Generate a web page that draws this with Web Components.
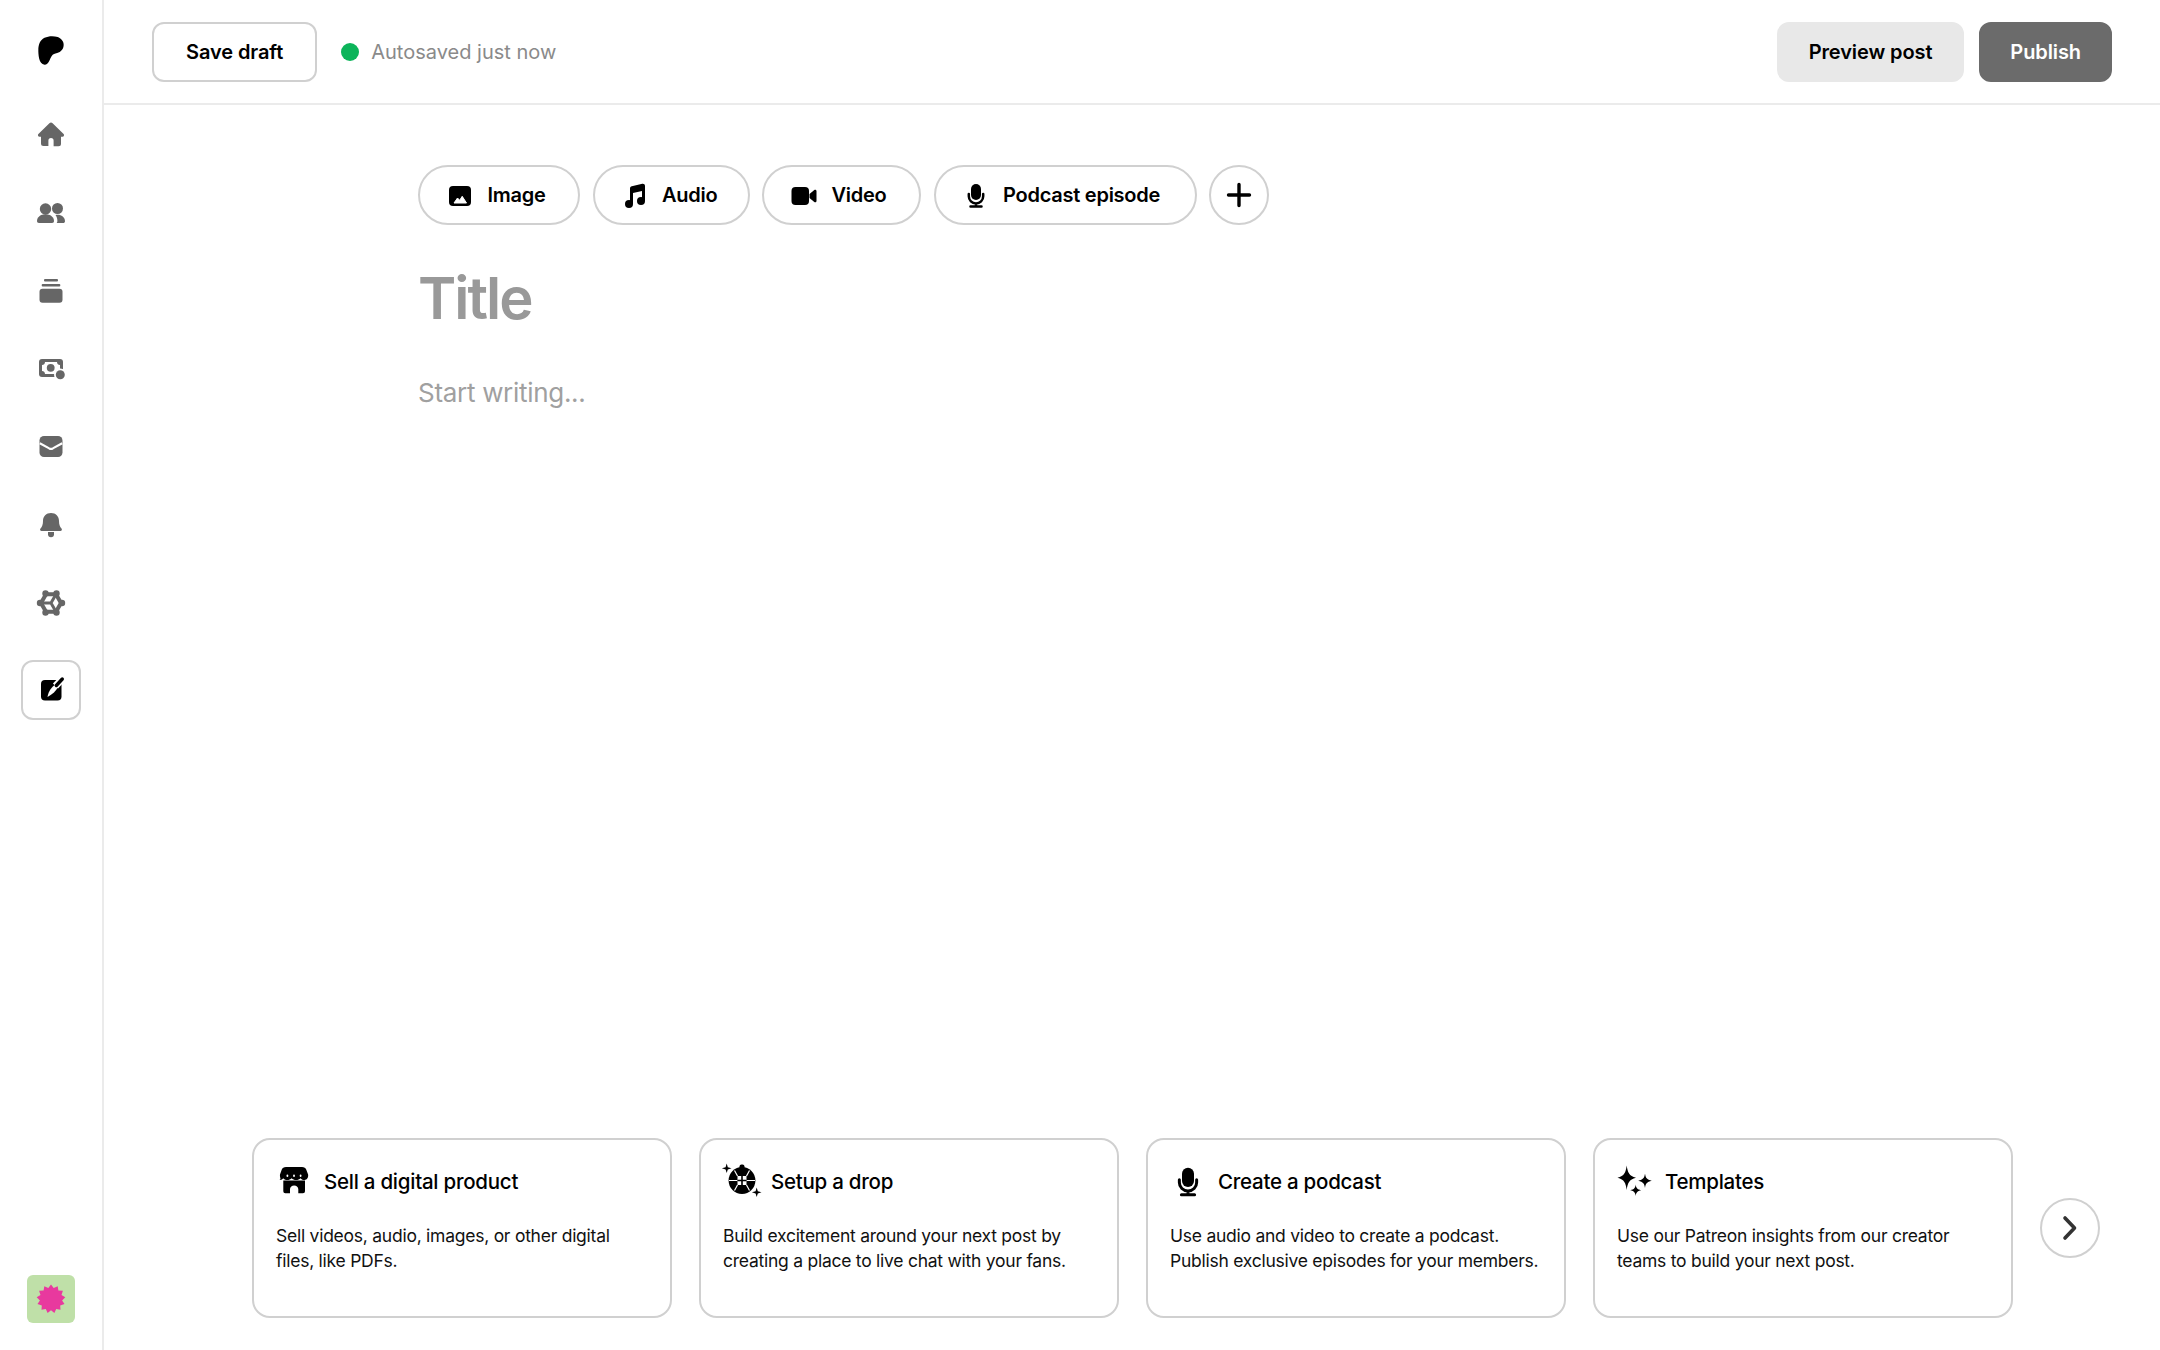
<!DOCTYPE html>
<html lang="en">
<head>
<meta charset="utf-8">
<title>New post</title>
<style>
  html, body { margin: 0; height: 100%; background: #fff; }
  body { font-family: Inter, "Liberation Sans", sans-serif; color: #000; }
</style>
</head>
<body>
<post-app>
  <side-bar slot="side"></side-bar>
  <top-bar slot="top">
    <ui-button slot="left">Save draft</ui-button>
    <save-status slot="left">Autosaved just now</save-status>
    <ui-button slot="right" kind="soft">Preview post</ui-button>
    <ui-button slot="right" kind="dark">Publish</ui-button>
  </top-bar>
  <post-editor slot="main">
    <ui-pill icon="image" width="162">Image</ui-pill>
    <ui-pill icon="music" width="157">Audio</ui-pill>
    <ui-pill icon="video" width="159">Video</ui-pill>
    <ui-pill icon="mic" width="263">Podcast episode</ui-pill>
    <round-button slot="more" icon="plus"></round-button>
  </post-editor>
  <card-row slot="bottom">
    <idea-card icon="store" heading="Sell a digital product">Sell videos, audio, images, or other digital<br>files, like PDFs.</idea-card>
    <idea-card icon="ball" heading="Setup a drop">Build excitement around your next post by<br>creating a place to live chat with your fans.</idea-card>
    <idea-card icon="mic" heading="Create a podcast">Use audio and video to create a podcast.<br>Publish exclusive episodes for your members.</idea-card>
    <idea-card icon="sparkles" heading="Templates">Use our Patreon insights from our creator<br>teams to build your next post.</idea-card>
    <round-button icon="chevron"></round-button>
  </card-row>
</post-app>

<script>
// all icons live here, keyed by name. sizes are set by whoever uses them
const ICONS = {
  logo: '<svg viewBox="0 0 24 24"><path d="M20 7.408c-.003-2.299-1.746-4.183-3.79-4.863-2.54-.844-5.888-.722-8.312.453C4.96 4.421 4.038 7.54 4.004 10.65c-.028 2.557.225 9.291 3.925 9.338 2.75.035 3.159-3.613 4.43-5.364.906-1.246 2.071-1.598 3.506-1.96 2.465-.624 4.14-2.613 4.135-5.256"/></svg>',
  home: '<svg viewBox="0 0 30 30"><path d="M13.4 3.2a2.300 2.300 0 013.200 0l11 10.800c1 1 .3 2.700-1.100 2.700H25v7a2.500 2.500 0 01-2.500 2.500h-4.900v-5.500a2.600 2.600 0 00-5.200 0V26H7.500A2.500 2.500 0 015 23.500v-6.800H3.500c-1.400 0-2.100-1.700-1.100-2.700z"/></svg>',
  people: '<svg viewBox="0 1 30 30"><circle cx="9.500" cy="12" r="5.700"/><path d="M1 24c0-4 3.500-6.800 8.500-6.800S18 20 18 24c0 1-.7 2-2 2H3c-1.300 0-2-1-2-2z"/><circle cx="21.500" cy="11.500" r="5.500"/><path d="M19.500 18c4.500-1.200 9.500 1.500 9.500 6.200 0 1-.7 1.800-2 1.800h-6.300c.5-.6.700-1.200.7-2 0-2.300-.7-4.300-1.900-6z"/></svg>',
  stack: '<svg viewBox="0 0 30 30"><rect x="8" y="3" width="14" height="2.500" rx="1"/><rect x="5.700" y="8" width="18.600" height="2.600" rx="1"/><rect x="3.500" y="12.800" width="23" height="14" rx="3"/></svg>',
  money: '<svg viewBox="0 0 30 30"><rect x="3" y="5" width="24" height="18" rx="3"/><rect x="6" y="8" width="18" height="12" rx="1" fill="#fff"/><path d="M6 8h3c0 2-1.300 3-3 3zM6 20h3c0-2-1.300-3-3-3zM24 8h-3c0 2 1.300 3 3 3z"/><circle cx="14.700" cy="13.800" r="3.900"/><circle cx="24.300" cy="20.700" r="6.300" fill="#fff"/><circle cx="24.300" cy="20.700" r="4.500"/></svg>',
  mail: '<svg viewBox="0 0 30 30"><rect x="3.500" y="4" width="23" height="21" rx="4.500"/><path d="M3.800 11.300l9.400 5.100a4 4 0 003.600 0l9.400-5.100" fill="none" stroke="#fff" stroke-width="2.200"/></svg>',
  bell: '<svg viewBox="0 0 30 30"><path d="M15 3c-4.800 0-8 3.500-8 8 0 3.800-1 6-2.500 7.600-.9 1-.3 2.400 1 2.400h19c1.300 0 1.900-1.400 1-2.400C24 17 23 14.800 23 11c0-4.500-3.200-8-8-8z"/><path d="M12 22h6v2.300a3 3 0 01-6 0z"/></svg>',
  gear: '<svg viewBox="0 0 30 30"><g fill="none" stroke="currentColor"><path d="M25 15l-5 8.660h-10L5 15l5-8.660h10z" stroke-width="4" stroke-linejoin="round"/><path d="M15 15H5M15 15l5-8.660M15 15l5 8.660" stroke-width="3"/></g><circle cx="26" cy="15" r="3.200"/><circle cx="20.500" cy="5.500" r="3.200"/><circle cx="9.500" cy="5.500" r="3.200"/><circle cx="4" cy="15" r="3.200"/><circle cx="9.500" cy="24.500" r="3.200"/><circle cx="20.500" cy="24.500" r="3.200"/></svg>',
  edit: '<svg viewBox="0 0 30 30"><rect x="5" y="5" width="20.500" height="20.500" rx="4"/><path d="M29 1L19.500 11" fill="none" stroke="#fff" stroke-width="7"/><path d="M11.500 22c.8-5.500 4-10 8.500-13l2.600 2.600c-2.600 4.200-6 8-11.100 10.400z" fill="#fff"/><path d="M26.300 4l-6 6.500" fill="none" stroke="currentColor" stroke-width="3.400" stroke-linecap="round"/></svg>',
  image: '<svg viewBox="0 0 30 30"><rect x="4" y="6" width="22" height="20" rx="4"/><path d="M9 23l3.500-5 2.200 2.300 2.500-4 4.300 6.700z" fill="#fff" stroke="#fff" stroke-linejoin="round"/></svg>',
  music: '<svg viewBox="0 0 30 30"><circle cx="9" cy="24" r="4"/><circle cx="21" cy="21" r="4"/><path d="M10 24V8.500c0-1.200.7-2 1.800-2.300l10.500-2.400c1.400-.3 2.700.7 2.700 2.100V21h-3V11l-9 2v11z"/></svg>',
  video: '<svg viewBox="0 0 30 30"><rect x="2.500" y="7" width="17.500" height="18" rx="4"/><path d="M20.500 14l4.800-4c1-.7 2.200 0 2.200 1.100v9.800c0 1.100-1.200 1.800-2.200 1.100l-4.800-4z"/></svg>',
  mic: '<svg viewBox="0 0 30 30"><rect x="10" y="4" width="10" height="16" rx="5"/><path d="M7.800 14v2.200a7.200 7.200 0 0014.400 0V14M15 23.500V26M9.500 26.500h11" fill="none" stroke="currentColor" stroke-width="2.500" stroke-linecap="round"/></svg>',
  plus: '<svg viewBox="0 0 30 30"><path d="M15 4.500v21M4.500 15h21" fill="none" stroke="currentColor" stroke-width="3.400" stroke-linecap="round"/></svg>',
  chevron: '<svg viewBox="0 0 30 30"><path d="M10 5l9.500 10L10 25" fill="none" stroke="#333" stroke-width="3.600" stroke-linecap="round" stroke-linejoin="round"/></svg>',
  store: '<svg viewBox="0 0 36 36"><path d="M10 4h16c2.200 0 3.600.9 4.300 2.700l1.800 4.800c.5 2.900-1.100 5.300-3.500 5.500-1.800.2-3.200-.6-4-1.800-1.100 1.200-2.700 1.800-4.500 1.800s-3.400-.6-4.500-1.800c-1.100 1.200-2.600 1.800-4.400 1.800s-3.200-.6-4-1.800c-.8 1.200-2.200 2-4 1.800C5.800 16.800 3.500 14.400 4 11.500l1.700-4.800C6.400 4.900 7.800 4 10 4z"/><path d="M7.300 17.500h21.700v10.800a2 2 0 01-2 2h-4.700V26a4.200 4.200 0 00-8.300 0v4.300H9.300a2 2 0 01-2-2z"/><g fill="#fff"><rect x="10.500" y="11.500" width="1.800" height="2.500" rx=".9"/><rect x="17.100" y="11.500" width="1.800" height="2.500" rx=".9"/><rect x="23.700" y="11.500" width="1.800" height="2.500" rx=".9"/></g></svg>',
  ball: '<svg viewBox="0 0 36 36" style="overflow:visible"><circle cx="19" cy="17.500" r="13.400"/><rect x="16.500" y="1.500" width="5" height="5" rx="2"/><path d="M3.700 .5l1.100 3.700 3.700 1.100-3.700 1.100-1.100 3.700-1.100-3.700-3.700-1.100 3.700-1.100zM33.700 24.500l1.100 3.700 3.700 1.100-3.700 1.100-1.100 3.700-1.100-3.700-3.700-1.100 3.700-1.100z"/><path d="M14.500 13L11.500 7.500M23.500 13l3-5.500M14.500 22l-3 5.500M23.500 22l3 5.500M14.500 17.500H6M23.500 17.500H32" fill="none" stroke="#fff" stroke-width="1.200"/><rect x="14.500" y="13" width="9" height="9" fill="#fff"/><path d="M19 13v9M14.500 17.500h9" stroke="#000" stroke-width="1.600"/></svg>',
  sparkles: '<svg viewBox="0 0 36 36"><path d="M9.700 2.500C10.700 9.500 12 13 19 14.700 12 16.500 10.700 20 9.700 27 8.700 20 7.500 16.500 .5 14.700 7.500 13 8.700 9.500 9.700 2.500zM28 10.500c.6 4.400 1.700 6 6.800 7.200-5.100 1.200-6.200 2.800-6.800 7.200-.6-4.400-1.700-6-6.800-7.200 5.100-1.200 6.200-2.800 6.800-7.200zM18.700 21.500c.4 3.400 1.400 4.800 5.500 5.700-4.100.9-5.100 2.300-5.500 5.800-.4-3.500-1.400-4.900-5.500-5.800 4.100-.9 5.100-2.300 5.500-5.700z"/></svg>'
}

class UiIcon extends HTMLElement {
  connectedCallback() {
    const size = this.getAttribute('size') || 30
    this.attachShadow({mode: 'open'}).innerHTML = `
      <style>
        :host { display: block; width: ${size}px; height: ${size}px; flex: none; }
        svg { display: block; width: 100%; height: 100%; fill: currentColor; }
      </style>
      ${ICONS[this.getAttribute('name')] || ''}`
  }
}

const appTemplate = document.createElement('template')
appTemplate.innerHTML = `
  <style>
    :host { display: flex; height: 1350px; }
    .main { flex: 1; min-width: 0; display: flex; flex-direction: column; }
    .grow { flex: 1; }
  </style>
  <slot name="side"></slot>
  <div class="main">
    <slot name="top"></slot>
    <slot name="main"></slot>
    <div class="grow"></div>
    <slot name="bottom"></slot>
  </div>`

class PostApp extends HTMLElement {
  constructor() {
    super()
    this.attachShadow({mode: 'open'}).appendChild(appTemplate.content.cloneNode(true))
  }
}

class SideBar extends HTMLElement {
  constructor() {
    super()
    const items = ['home', 'people', 'stack', 'money', 'mail', 'bell', 'gear']
    // badge on the avatar is a 13 point burst
    const points = []
    for (let i = 0; i < 26; i++) {
      const r = i % 2 ? 11.2 : 14.4
      const a = Math.PI * i / 13 - Math.PI / 2
      points.push((24 + r * Math.cos(a)).toFixed(1) + ',' + (24 + r * Math.sin(a)).toFixed(1))
    }
    this.attachShadow({mode: 'open'}).innerHTML = `
      <style>
        :host { display: flex; flex-direction: column; align-items: center; width: 102px; flex: none; border-right: 2px solid #ebebeb; color: #666; }
        .logo { height: 96px; display: flex; align-items: flex-start; padding-top: 33px; box-sizing: border-box; color: #000; }
        .item { height: 78px; display: flex; align-items: center; justify-content: center; }
        .active { width: 60px; height: 60px; box-sizing: border-box; margin-top: 18px; border: 2px solid #d0d0d0; border-radius: 12px; display: flex; align-items: center; justify-content: center; color: #000; }
        .avatar { margin-top: auto; margin-bottom: 27px; width: 48px; height: 48px; border-radius: 6px; background: #bfe0a8; }
        .avatar svg { display: block; }
      </style>
      <div class="logo"><ui-icon name="logo" size="38"></ui-icon></div>
      ${items.map(n => `<div class="item"><ui-icon name="${n}"></ui-icon></div>`).join('')}
      <div class="active"><ui-icon name="edit"></ui-icon></div>
      <div class="avatar"><svg width="48" height="48"><polygon points="${points.join(' ')}" fill="#e8399e"/></svg></div>`
  }
}

class TopBar extends HTMLElement {
  constructor() {
    super()
    this.attachShadow({mode: 'open'}).innerHTML = `
      <style>
        :host { display: flex; align-items: flex-start; justify-content: space-between; height: 81px; padding: 22px 48px 0; flex: none; border-bottom: 2px solid #ebebeb; }
        .side { display: flex; align-items: center; gap: 15px; height: 60px; }
        .left { gap: 24px; }
      </style>
      <div class="side left"><slot name="left"></slot></div>
      <div class="side"><slot name="right"></slot></div>`
  }
}

class UiButton extends HTMLElement {
  constructor() {
    super()
    this.attachShadow({mode: 'open'}).innerHTML = `
      <style>
        :host { display: inline-flex; align-items: center; justify-content: center; height: 60px; box-sizing: border-box; padding: 0 32px; border: 2px solid #d0d0d0; border-radius: 12px; font-size: 20px; font-weight: 600; letter-spacing: -.1px; background: #fff; color: #000; }
        :host([kind="soft"]) { background: #e8e8e8; border-color: #e8e8e8; padding: 0 30px; }
        :host([kind="dark"]) { background: #6b6b6b; border-color: #6b6b6b; color: #fff; padding: 0 29px; }
      </style>
      <slot></slot>`
  }
}

class SaveStatus extends HTMLElement {
  constructor() {
    super()
    this.attachShadow({mode: 'open'}).innerHTML = `
      <style>
        :host { display: flex; align-items: center; gap: 12px; font-size: 20px; color: #8a8a8a; }
        i { width: 18px; height: 18px; border-radius: 50%; background: #0cb45a; }
      </style>
      <i></i><slot></slot>`
  }
}

class PostEditor extends HTMLElement {
  constructor() {
    super()
    this.attachShadow({mode: 'open'}).innerHTML = `
      <style>
        :host { display: block; padding: 60px 0 0 314px; }
        .pills { display: flex; gap: 12.500px; }
        h1 { margin: 28px 0 0; height: 90px; font-size: 58px; line-height: 90px; font-weight: 600; letter-spacing: -2px; color: #999; }
        p { margin: 30px 0 0; font-size: 26px; line-height: 40px; letter-spacing: -.3px; color: #a0a0a0; }
      </style>
      <div class="pills"><slot></slot><slot name="more"></slot></div>
      <h1>Title</h1>
      <p>Start writing...</p>`
  }
}

class UiPill extends HTMLElement {
  constructor() {
    super()
    this.attachShadow({mode: 'open'}).innerHTML = `
      <style>
        :host { display: inline-flex; align-items: center; gap: 12.500px; width: ${this.getAttribute('width')}px; height: 60px; box-sizing: border-box; padding-left: 25px; border: 2px solid #d0d0d0; border-radius: 30px; font-size: 20px; font-weight: 600; letter-spacing: -.25px; }
      </style>
      <ui-icon name="${this.getAttribute('icon')}"></ui-icon><slot></slot>`
  }
}

class RoundButton extends HTMLElement {
  constructor() {
    super()
    this.attachShadow({mode: 'open'}).innerHTML = `
      <style>
        :host { display: flex; align-items: center; justify-content: center; width: 60px; height: 60px; box-sizing: border-box; border: 2px solid #d0d0d0; border-radius: 50%; flex: none; }
      </style>
      <ui-icon name="${this.getAttribute('icon')}"></ui-icon>`
  }
}

class CardRow extends HTMLElement {
  constructor() {
    super()
    this.attachShadow({mode: 'open'}).innerHTML = `
      <style>
        :host { display: flex; align-items: center; gap: 27px; padding: 0 0 32px 148px; }
      </style>
      <slot></slot>`
  }
}

class IdeaCard extends HTMLElement {
  constructor() {
    super()
    this.attachShadow({mode: 'open'}).innerHTML = `
      <style>
        :host { display: block; width: 420px; height: 180px; box-sizing: border-box; padding: 23px 22px; border: 2px solid #d0d0d0; border-radius: 18px; flex: none; }
        .head { display: flex; align-items: center; gap: 12px; height: 36px; font-size: 20.500px; font-weight: 500; letter-spacing: -.25px; }
        .body { margin-top: 24px; font-size: 17.500px; line-height: 25px; letter-spacing: -.25px; color: #111; white-space: nowrap; }
      </style>
      <div class="head"><ui-icon name="${this.getAttribute('icon')}" size="36"></ui-icon><span>${this.getAttribute('heading')}</span></div>
      <div class="body"><slot></slot></div>`
  }
}

customElements.define('ui-icon', UiIcon)
customElements.define('post-app', PostApp)
customElements.define('side-bar', SideBar)
customElements.define('top-bar', TopBar)
customElements.define('ui-button', UiButton)
customElements.define('save-status', SaveStatus)
customElements.define('post-editor', PostEditor)
customElements.define('ui-pill', UiPill)
customElements.define('round-button', RoundButton)
customElements.define('card-row', CardRow)
customElements.define('idea-card', IdeaCard)
</script>
</body>
</html>
